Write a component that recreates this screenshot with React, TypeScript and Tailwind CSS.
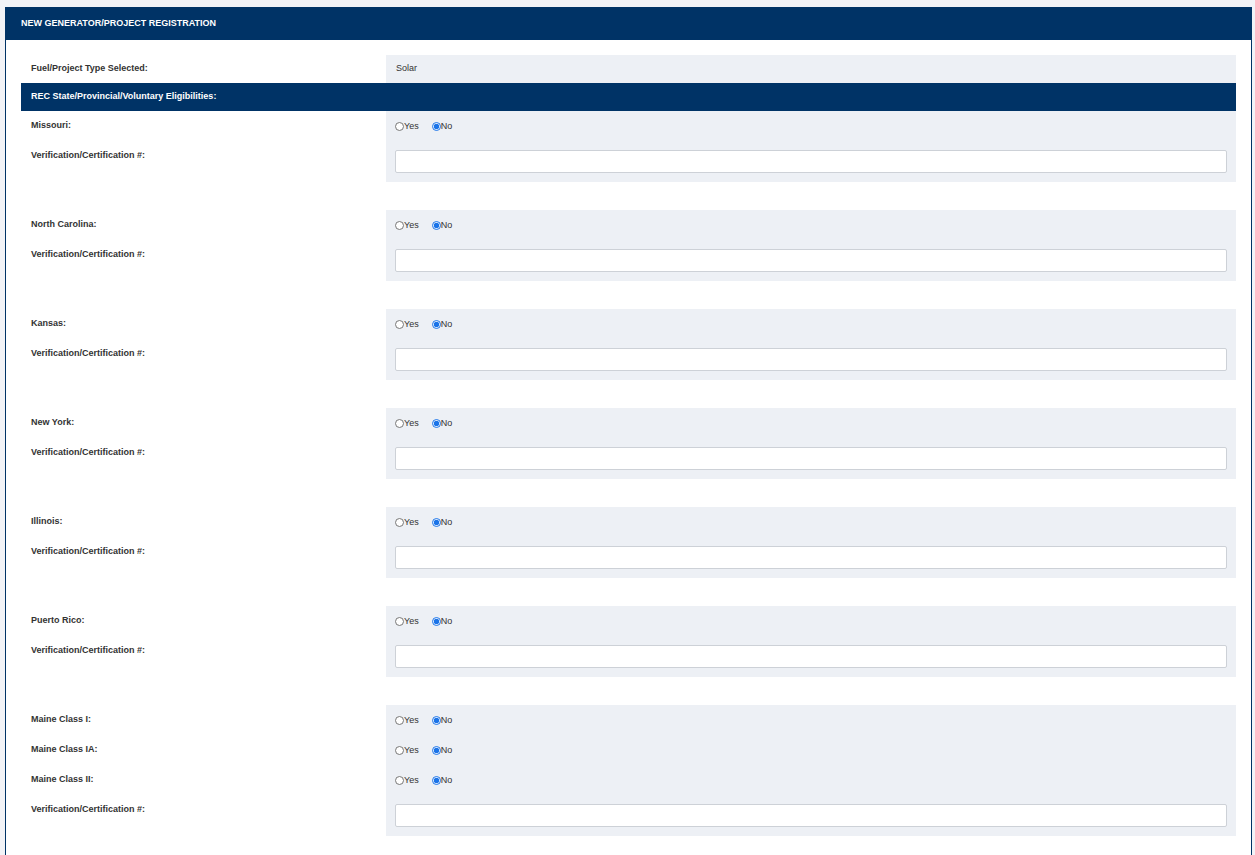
import React from "react";

const font = { fontFamily: '"Liberation Sans", Arial, sans-serif' };

function Radio({ checked }: { checked: boolean }) {
  return (
    <input
      type="radio"
      readOnly
      checked={checked}
      className="m-0 h-[9px] w-[9px] accent-[#1a73e8]"
    />
  );
}

function YesNo() {
  return (
    <div className="flex items-center text-[9px] text-[#333]">
      <label className="flex items-center">
        <Radio checked={false} />
        <span className="mt-[2px]">Yes</span>
      </label>
      <label className="ml-[13px] flex items-center">
        <Radio checked={true} />
        <span className="mt-[2px]">No</span>
      </label>
    </div>
  );
}

function RadioRow({ label }: { label: string }) {
  return (
    <div className="flex h-[30px]">
      <div className="flex w-[365px] items-center pl-[10px] text-[9px] font-bold text-[#333]">
        {label}
      </div>
      <div className="flex flex-1 items-center bg-[#edf0f5] pl-[9px]">
        <YesNo />
      </div>
    </div>
  );
}

function InputRow() {
  return (
    <div className="flex">
      <div className="w-[365px] pl-[10px] pt-[8px] text-[9px] font-bold leading-[12px] text-[#333]">
        Verification/Certification #:
      </div>
      <div className="flex-1 bg-[#edf0f5] px-[9px] pb-[9px] pt-[9px]">
        <div className="h-[23px] w-full rounded-[2px] border border-[#cdd1d7] bg-white" />
      </div>
    </div>
  );
}

function Block({ labels }: { labels: string[] }) {
  return (
    <div className="mb-[28px]">
      {labels.map((l) => (
        <RadioRow key={l} label={l} />
      ))}
      <InputRow />
    </div>
  );
}

export default function App() {
  const blocks = [
    ["Missouri:"],
    ["North Carolina:"],
    ["Kansas:"],
    ["New York:"],
    ["Illinois:"],
    ["Puerto Rico:"],
    ["Maine Class I:", "Maine Class IA:", "Maine Class II:"],
  ];
  return (
    <div className="min-h-[855px] bg-[#f2f3f7] pt-[7px]" style={font}>
      <div className="ml-[5px] w-[1247px] border-x border-[#003366] bg-white pb-[40px]">
        <div className="-mx-px flex h-[33px] items-center bg-[#003366] pl-[16px] text-[9px] font-bold text-white">
          NEW GENERATOR/PROJECT REGISTRATION
        </div>
        <div className="px-[15px] pt-[15px]">
          <div className="flex h-[28px]">
            <div className="flex w-[365px] items-center pl-[10px] text-[9px] font-bold text-[#333]">
              Fuel/Project Type Selected:
            </div>
            <div className="flex flex-1 items-center bg-[#edf0f5] pl-[10px] text-[9px] text-[#333]">
              Solar
            </div>
          </div>
          <div className="flex h-[28px] items-center bg-[#003366] pl-[10px] text-[9px] font-bold text-white">
            REC State/Provincial/Voluntary Eligibilities:
          </div>
          {blocks.map((b) => (
            <Block key={b[0]} labels={b} />
          ))}
        </div>
      </div>
    </div>
  );
}
